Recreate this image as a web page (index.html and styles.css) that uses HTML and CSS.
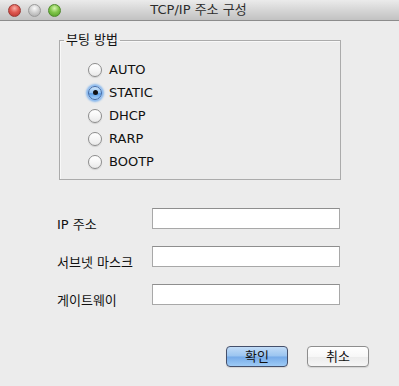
FILE: index.html
```html
<!DOCTYPE html>
<html lang="ko">
<head>
<meta charset="utf-8">
<title>TCP/IP 주소 구성</title>
<link rel="stylesheet" href="styles.css">
</head>
<body>
<div class="window">
  <div class="titlebar">
    <div class="lights">
      <span class="light red"></span>
      <span class="light gray"></span>
      <span class="light green"></span>
    </div>
    <div class="title">TCP/IP 주소 구성</div>
    <div></div>
  </div>
  <fieldset class="group">
    <legend>부팅 방법</legend>
    <div class="radios">
      <div class="radio-row"><span class="radio"></span><span class="rlabel">AUTO</span></div>
      <div class="radio-row"><span class="radio on"></span><span class="rlabel">STATIC</span></div>
      <div class="radio-row"><span class="radio"></span><span class="rlabel">DHCP</span></div>
      <div class="radio-row"><span class="radio"></span><span class="rlabel">RARP</span></div>
      <div class="radio-row"><span class="radio"></span><span class="rlabel">BOOTP</span></div>
    </div>
  </fieldset>
  <div class="fields">
    <div class="frow"><span class="flabel">IP 주소</span><div class="field"></div></div>
    <div class="frow"><span class="flabel">서브넷 마스크</span><div class="field"></div></div>
    <div class="frow"><span class="flabel">게이트웨이</span><div class="field"></div></div>
  </div>
  <div class="buttons">
    <button class="btn primary">확인</button>
    <button class="btn">취소</button>
  </div>
</div>
</body>
</html>
```
FILE: styles.css
```css
html, body {
  margin: 0;
  padding: 0;
}
body {
  width: 399px;
  height: 386px;
  background: #ececec;
  font-family: "DejaVu Sans", "Noto Sans CJK KR", sans-serif;
  font-size: 13px;
  color: #111;
  overflow: hidden;
}
.window {
  display: flex;
  flex-direction: column;
}
.titlebar {
  height: 20px;
  border-bottom: 1px solid #8c8c8c;
  background: linear-gradient(#ebebeb, #d6d6d6 50%, #c2c2c2);
  display: grid;
  grid-template-columns: 1fr auto 1fr;
  align-items: center;
}
.lights {
  display: flex;
  gap: 7px;
  padding-left: 8px;
  padding-top: 1px;
}
.light {
  width: 13px;
  height: 13px;
  border-radius: 50%;
  box-sizing: border-box;
}
.light.red {
  background: radial-gradient(circle at 50% 30%, #f7b0a8 0, #e05a52 45%, #b5302c 100%);
  border: 1px solid #9b3a35;
}
.light.gray {
  background: radial-gradient(circle at 50% 30%, #fafafa 0, #cdcdcd 50%, #a5a5a5 100%);
  border: 1px solid #9a9a9a;
}
.light.green {
  background: radial-gradient(circle at 50% 30%, #d7f5b0 0, #82c64c 45%, #4d9a22 100%);
  border: 1px solid #4f8a2d;
}
.title {
  color: #2d2d2d;
  font-size: 13px;
  line-height: 20px;
  padding-right: 2px;
}
.group {
  margin: 12px 0 0 59px;
  padding: 0 0 6px 0;
  width: 282px;
  box-sizing: border-box;
  border: 1px solid #ababab;
  box-shadow: inset 1px 1px 0 #f8f8f8;
}
.group legend {
  margin-left: 4px;
  padding: 0 2px;
  line-height: 14px;
  font-size: 13px;
  color: #111;
}
.radios {
  margin-top: 11px;
  padding-left: 28px;
  display: flex;
  flex-direction: column;
}
.radio-row {
  height: 23px;
  display: flex;
  align-items: center;
}
.radio {
  width: 14px;
  height: 14px;
  border-radius: 50%;
  box-sizing: border-box;
  border: 1px solid #8d8d8d;
  background: linear-gradient(#ffffff, #f6f6f6 50%, #e9e9e9);
  box-shadow: 0 1px 1px rgba(0,0,0,0.12);
  display: flex;
  align-items: center;
  justify-content: center;
  flex: none;
}
.radio.on {
  border-color: #3f6aa8;
  background: linear-gradient(#d0e6fb, #8fc0f1 50%, #5d9ee6 55%, #a8d2f8);
  box-shadow: 0 0 2px 2px #86b7ee;
}
.radio.on::after {
  content: "";
  width: 5px;
  height: 5px;
  border-radius: 50%;
  background: #111;
}
.rlabel {
  margin-left: 7px;
  line-height: 16px;
}
.fields {
  margin: 28px 0 0 57px;
  display: flex;
  flex-direction: column;
  gap: 17px;
}
.frow {
  display: flex;
  height: 21px;
}
.flabel {
  width: 95px;
  height: 21px;
  line-height: 21px;
  padding-top: 6px;
  box-sizing: content-box;
  color: #111;
  flex: none;
}
.field {
  width: 188px;
  height: 21px;
  box-sizing: border-box;
  background: #fff;
  border: 1px solid #a8a8a8;
  border-top-color: #8e8e8e;
}
.buttons {
  margin: 41px 30px 0 0;
  display: flex;
  justify-content: flex-end;
  gap: 19px;
}
.btn {
  width: 62px;
  height: 21px;
  padding: 0;
  box-sizing: border-box;
  border-radius: 4px;
  font-family: "DejaVu Sans", "Noto Sans CJK KR", sans-serif;
  font-size: 13px;
  line-height: 19px;
  color: #111;
  border: 1px solid #8e8e8e;
  background: linear-gradient(#ffffff, #f7f7f7 50%, #ececec 55%, #f6f6f6);
  box-shadow: 0 1px 1px rgba(0,0,0,0.1);
}
.btn.primary {
  border-color: #45506b;
  background: linear-gradient(#c2dcf7, #9ac4f0 48%, #75aae8 52%, #9ecbf6);
}
```
